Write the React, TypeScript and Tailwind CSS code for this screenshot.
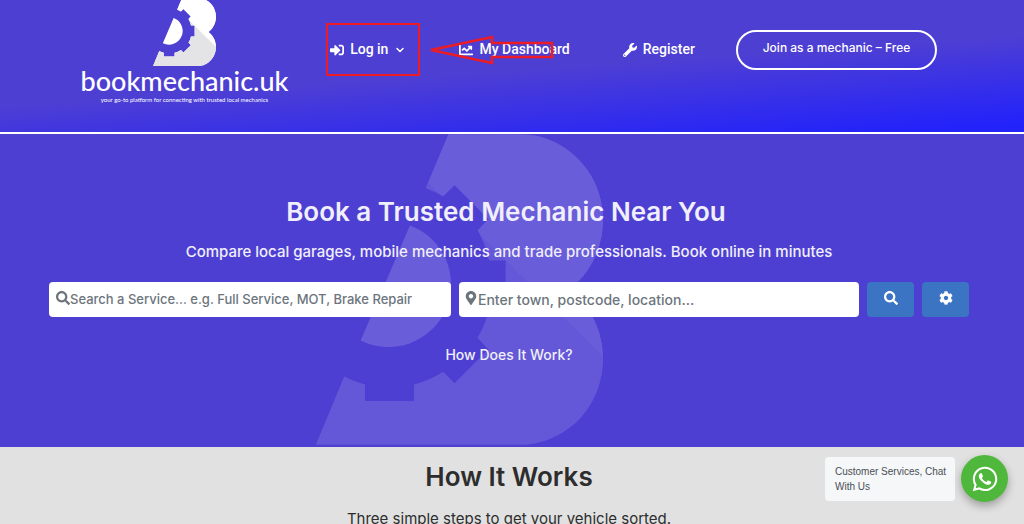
import { useId } from "react";
import {
  FaChartLine,
  FaCog,
  FaMapMarkerAlt,
  FaSearch,
  FaSignInAlt,
  FaWhatsapp,
  FaWrench,
} from "react-icons/fa";
import { FiChevronDown } from "react-icons/fi";

function GearB({ className, shade }: { className: string; shade: string }) {
  const clip = useId();
  return (
    <svg viewBox="48 14 862 932" className={className} aria-hidden="true">
      <clipPath id={clip}>
        <path d="M446 14H660A250 258 0 0 1 808 480A250 258 0 0 1 660 946H48L133 742A310 310 0 0 0 195 766V815H343V766A310 310 0 0 0 430 728L464 762L566 660L534 625A310 310 0 0 0 568 540H618V392H568A310 310 0 0 0 534 303L566 268L464 166L430 200A310 310 0 0 0 378 175Z" />
      </clipPath>
      <g clipPath={`url(#${clip})`}>
        <rect x="48" y="14" width="862" height="932" fill="currentColor" />
        <path d="M226 0L618 392L920 690V960H0V392Z" fill={shade} />
        <path d="M618 392L378 152V14H920V690Z" fill="currentColor" />
      </g>
      <path d="M330 288A188 188 0 1 1 182 633Z" fill="currentColor" />
    </svg>
  );
}

function Header() {
  return (
    <header className="border-b-2 border-white bg-[linear-gradient(176deg,#4e3fd3_52%,#2222fb_96%)] text-white">
      <div className="flex h-33 items-start justify-between pr-[87px] pl-20">
        <a href="#home" className="-mt-0.5 flex w-[209px] flex-col items-center">
          <GearB className="h-[68px] w-[63px]" shade="#e4e4e6" />
          <span className="font-[family-name:Lato,sans-serif] text-[27px] leading-[30px] font-medium whitespace-nowrap">
            bookmechanic.uk
          </span>
          <span className="font-[family-name:Lato,sans-serif] text-[6px] leading-2 whitespace-nowrap">
            your go-to platform for connecting with trusted local mechanics
          </span>
        </a>
        <nav className="flex h-[99px] items-center gap-[53px] font-[family-name:Roboto,sans-serif] text-[14px] font-medium whitespace-nowrap">
          <a href="#login" className="relative flex items-center gap-1.5">
            <FaSignInAlt className="size-3.5" />
            Log in
            <FiChevronDown className="size-3" strokeWidth={3} />
            <span className="absolute -top-4 -right-3.5 -bottom-4 -left-1 border-2 border-[#ed1c24]" />
          </a>
          <a href="#dashboard" className="relative flex items-center gap-1.5">
            <FaChartLine className="size-3.5" />
            My Dashboard
            <svg
              viewBox="0 0 126 30"
              className="absolute top-1/2 right-4 h-[30px] w-[126px] -translate-y-1/2"
              fill="none"
              stroke="#ed1c24"
              strokeWidth="2.5"
              aria-hidden="true"
            >
              <path d="M3 15L64 2V8H124V22H64V28Z" />
            </svg>
          </a>
          <a href="#register" className="flex items-center gap-1.5">
            <FaWrench className="size-3.5" />
            Register
          </a>
        </nav>
        <div className="flex h-[99px] items-center">
          <a
            href="#join"
            className="flex h-10 w-[201px] items-center justify-center rounded-full border-2 border-white pb-1 text-[12px] font-medium whitespace-nowrap"
          >
            Join as a mechanic – Free
          </a>
        </div>
      </div>
    </header>
  );
}

function Hero() {
  return (
    <section className="relative h-[313px] overflow-hidden bg-[#4e3fd3] text-[#f0effb]">
      <GearB
        className="absolute top-0 left-[calc(50%-196px)] h-[311px] w-[287px] text-[#6a5dda]"
        shade="#6457d8"
      />
      <div className="relative flex flex-col items-center pt-[60px] pr-[55px] pl-[49px]">
        <h1 className="-ml-1.5 text-[26px] leading-9 font-semibold">Book a Trusted Mechanic Near You</h1>
        <p className="mt-2.5 text-[15px] leading-6 font-medium">
          Compare local garages, mobile mechanics and trade professionals. Book online in minutes
        </p>
        <form className="mt-[18px] flex h-[35px] w-full gap-2">
          <label className="flex min-w-0 flex-1 items-center rounded bg-white pl-[7px] text-[#6c757d]">
            <FaSearch className="mb-1 size-3.5 shrink-0" />
            <input
              type="text"
              aria-label="Search a service"
              placeholder="Search a Service… e.g. Full Service, MOT, Brake Repair"
              className="min-w-0 flex-1 text-[13px] font-medium outline-none placeholder:text-[#6c757d]"
            />
          </label>
          <label className="flex min-w-0 flex-1 items-center rounded bg-white pl-[5px] text-[#6c757d]">
            <FaMapMarkerAlt className="mb-1 size-3.5 shrink-0" />
            <input
              type="text"
              aria-label="Location"
              placeholder="Enter town, postcode, location..."
              className="min-w-0 flex-1 text-[14px] font-medium outline-none placeholder:text-[#6c757d]"
            />
          </label>
          <button
            type="button"
            aria-label="Search"
            className="flex w-[47px] items-center justify-center rounded bg-[#3a74c2] pb-1 text-white"
          >
            <FaSearch className="size-3.5" />
          </button>
          <button
            type="button"
            aria-label="Advanced filters"
            className="flex w-[47px] items-center justify-center rounded bg-[#3a74c2] pb-1 text-white"
          >
            <FaCog className="size-3.5" />
          </button>
        </form>
        <a href="#how" className="mt-[26px] text-[14px] leading-6 font-medium">
          How Does It Work?
        </a>
      </div>
    </section>
  );
}

function ChatWidget() {
  return (
    <aside className="fixed right-4 bottom-[22px] flex items-center gap-1.5">
      <p className="w-[130px] rounded bg-[#f5f7f9] py-[7px] pr-1 pl-2.5 font-[family-name:'Liberation_Sans',Arial,sans-serif] text-[10px] leading-[15px] text-[#4a4f54]">
        Customer Services, Chat With Us
      </p>
      <button
        type="button"
        aria-label="Open WhatsApp chat"
        className="flex size-[47px] items-center justify-center rounded-full bg-[#4fb83c] text-white shadow-[0_4px_8px_rgba(0,0,0,0.3)]"
      >
        <FaWhatsapp className="size-7" />
      </button>
    </aside>
  );
}

export default function App() {
  return (
    <div className="min-h-screen bg-[#e1e1e1] font-[family-name:Inter,sans-serif]">
      <Header />
      <Hero />
      <section id="how" className="flex flex-col items-center pt-3 pr-1.5 text-center text-[#2d2d2d]">
        <h2 className="text-[26px] leading-9 font-semibold">How It Works</h2>
        <p className="mt-3 text-[15px] leading-6">Three simple steps to get your vehicle sorted.</p>
      </section>
      <ChatWidget />
    </div>
  );
}
